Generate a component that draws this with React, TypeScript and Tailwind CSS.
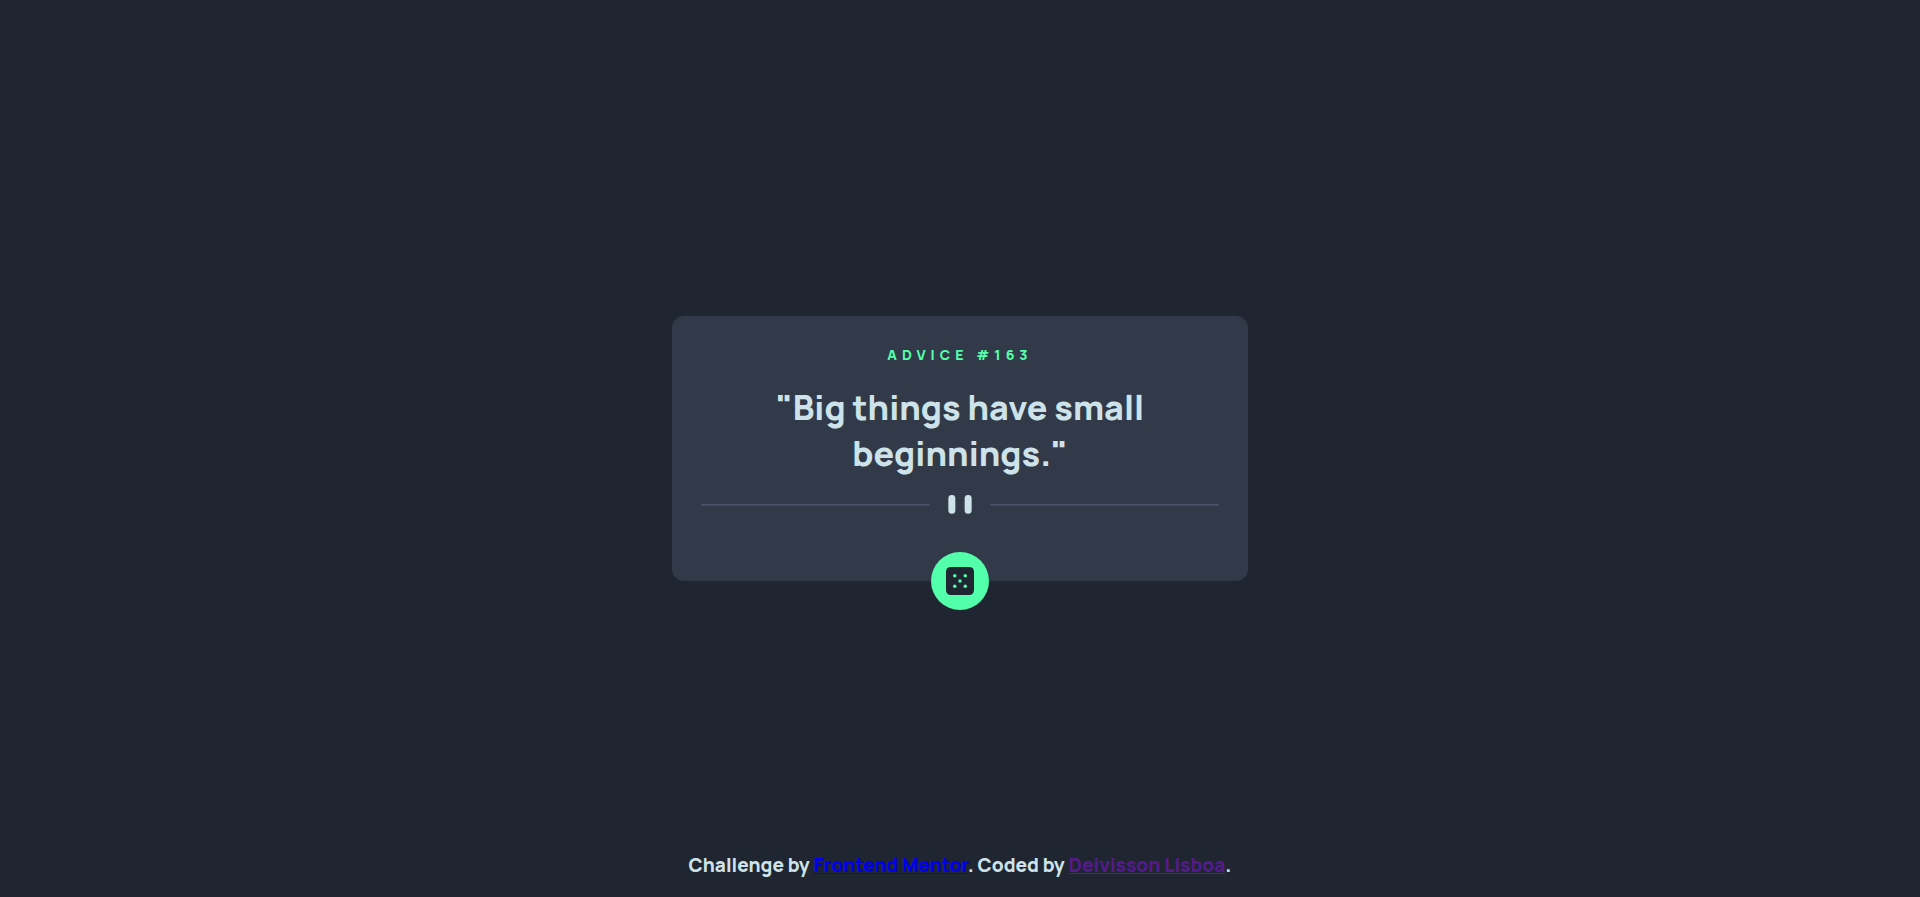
function Divider() {
  return (
    <svg className="block w-full" viewBox="0 0 444 16" fill="none" aria-hidden="true">
      <path fill="#4F5D74" d="M0 8h196v1H0zM248 8h196v1H248z" />
      <g transform="translate(212)" fill="#CEE3E9">
        <rect width="6" height="16" rx="3" />
        <rect x="14" width="6" height="16" rx="3" />
      </g>
    </svg>
  );
}

function Dice() {
  return (
    <svg className="size-7" viewBox="0 0 24 24" aria-hidden="true">
      <rect width="24" height="24" rx="4" fill="#1F2632" />
      <g fill="#53FFAA">
        <circle cx="7.5" cy="7.5" r="1.5" />
        <circle cx="16.5" cy="7.5" r="1.5" />
        <circle cx="12" cy="12" r="1.5" />
        <circle cx="7.5" cy="16.5" r="1.5" />
        <circle cx="16.5" cy="16.5" r="1.5" />
      </g>
    </svg>
  );
}

export default function App() {
  return (
    <div className="flex min-h-screen flex-col bg-[#1f2632] font-['Manrope','Inter',sans-serif] font-extrabold text-[#cee3e9]">
      <main className="flex flex-1 items-center justify-center pt-14">
        <section className="flex w-[30%] min-w-80 flex-col items-center rounded-xl bg-[#323a49] px-[29px] pt-[29px] text-center">
          <h1 className="text-sm leading-5 tracking-[5px] text-[#53ffaa]">ADVICE #163</h1>
          <p className="my-[19px] px-8 text-[34px] leading-[46px]">"Big things have small beginnings."</p>
          <Divider />
          <button
            type="button"
            aria-label="New advice"
            className="mt-[38px] -mb-[29px] flex size-[58px] cursor-pointer items-center justify-center rounded-full bg-[#53ffaa]"
          >
            <Dice />
          </button>
        </section>
      </main>
      <footer className="px-4 pt-3 pb-5 text-center text-[19px] leading-6">
        Challenge by{" "}
        <a href="https://www.frontendmentor.io" className="text-[#0000ee] underline">Frontend Mentor</a>
        . Coded by{" "}
        <a href="#" className="text-[#551a8b] underline">Deivisson Lisboa</a>.
      </footer>
    </div>
  );
}
